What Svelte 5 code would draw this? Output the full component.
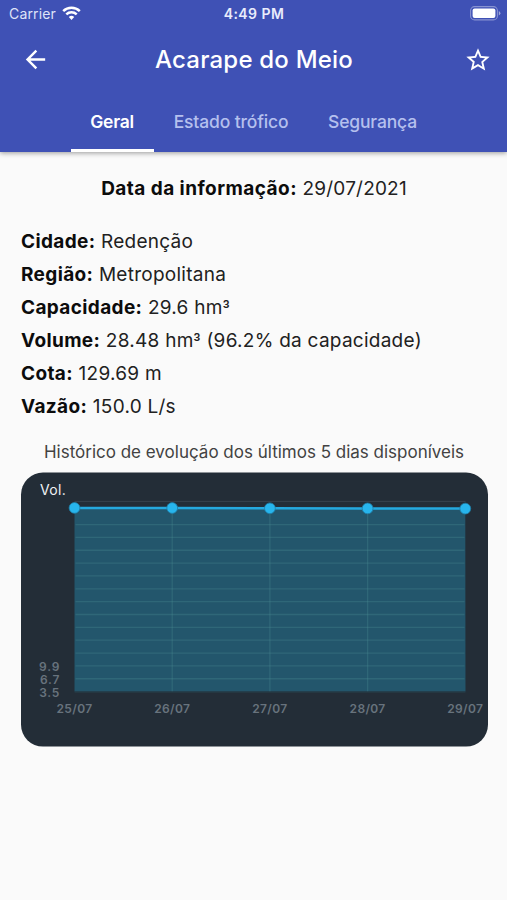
<script>
  const tabs = [
    { label: 'Geral', width: 83 },
    { label: 'Estado trófico', width: 155 },
    { label: 'Segurança', width: 128 },
  ];
  const info = [
    ['Cidade:', 'Redenção'],
    ['Região:', 'Metropolitana'],
    ['Capacidade:', '29.6 hm', '³'],
    ['Volume:', '28.48 hm', '³', ' (96.2% da capacidade)'],
    ['Cota:', '129.69 m'],
    ['Vazão:', '150.0 L/s'],
  ];
  const points = [
    { x: 53.5, y: 35.3, day: '25/07' },
    { x: 151.2, y: 35.4, day: '26/07' },
    { x: 248.9, y: 35.7, day: '27/07' },
    { x: 346.6, y: 35.8, day: '28/07' },
    { x: 444.3, y: 36, day: '29/07' },
  ];
  const bottom = 219;
  const step = 12.85;
  const rows = Array.from({ length: 13 }, (_, i) => bottom - (i + 1) * step);
  const line = points.map((p) => `${p.x},${p.y}`).join(' ');
  const ticks = [
    { y: 198.4, label: '9.9' },
    { y: 211.4, label: '6.7' },
    { y: 224.2, label: '3.5' },
  ];
</script>

<div class="screen">
  <header>
    <div class="status">
      <div class="carrier">
        <span>Carrier</span>
        <svg width="19" height="15" viewBox="0 0 19 15" fill="none" stroke="#fff" stroke-width="2.5">
          <path d="M1.2 5.1a12 12 0 0 1 16.6 0" />
          <path d="M4.3 8.3a7.5 7.5 0 0 1 10.4 0" />
          <path d="M9.5 14l-2.7-2.9a3.9 3.9 0 0 1 5.4 0z" fill="#fff" stroke="none" />
        </svg>
      </div>
      <span class="time">4:49 PM</span>
      <svg class="battery" width="31" height="15" viewBox="0 0 31 15">
        <rect x="0.6" y="0.6" width="26.8" height="13.3" rx="4" fill="none" stroke="#fff" stroke-opacity=".38" stroke-width="1.1" />
        <rect x="2.6" y="2.6" width="22.8" height="9.4" rx="2" fill="#fff" />
        <path d="M28.8 5v4.5q1.6-.7 1.6-2.25T28.8 5z" fill="#fff" fill-opacity=".5" />
      </svg>
    </div>
    <div class="bar">
      <svg width="29" height="29" viewBox="0 0 24 24" fill="#fff">
        <path d="M20 11H7.83l5.59-5.59L12 4l-8 8 8 8 1.41-1.41L7.83 13H20v-2z" />
      </svg>
      <h1>Acarape do Meio</h1>
      <svg width="28" height="28" viewBox="0 0 24 24" fill="#fff">
        <path d="M22 9.24l-7.19-.62L12 2 9.19 8.63 2 9.24l5.46 4.73L5.82 21 12 17.27 18.18 21l-1.63-7.03L22 9.24zM12 15.4l-3.76 2.27 1-4.28-3.32-2.88 4.38-.38L12 6.1l1.71 4.04 4.38.38-3.32 2.88 1 4.28L12 15.4z" />
      </svg>
    </div>
    <nav>
      {#each tabs as tab, i}
        <div class="tab" class:active={i === 0} style:width="{tab.width}px">{tab.label}</div>
      {/each}
    </nav>
  </header>

  <main>
    <p class="date"><b>Data da informação:</b> 29/07/2021</p>
    <div class="info">
      {#each info as [name, value, unit, rest]}
        <p><b>{name}</b> {value}{#if unit}<span class="cube">{unit}</span>{/if}{rest ?? ''}</p>
      {/each}
    </div>
    <p class="caption">Histórico de evolução dos últimos 5 dias disponíveis</p>
    <div class="chart">
      <svg width="467" height="274" viewBox="0 0 467 274">
        <text x="19" y="22.8" class="title">Vol.</text>
        <line x1="53.5" x2="444.5" y1="28.8" y2="28.8" stroke="#37434d" />
        <polygon points="53.5,{bottom} {line} 444.5,{bottom}" fill="#23566c" />
        {#each rows as y}
          <line x1="54.5" x2="443.5" y1={y} y2={y} class="grid" />
        {/each}
        {#each points.slice(1, 4) as p}
          <line x1={p.x} x2={p.x} y1="36" y2={bottom} class="grid" />
        {/each}
        <line x1="53.5" x2="444.5" y1="219.5" y2="219.5" stroke="#273f48" />
        <polyline points={line} fill="none" stroke="#25a9df" stroke-width="2.5" />
        {#each points as p}
          <circle cx={p.x} cy={p.y} r="5.4" fill="#27b5ed" stroke="#217da6" stroke-width=".8" />
          <text x={p.x} y="240.8" text-anchor="middle" class="day">{p.day}</text>
        {/each}
        {#each ticks as t}
          <text x="39.2" y={t.y} text-anchor="end" class="tick">{t.label}</text>
        {/each}
      </svg>
    </div>
  </main>
</div>

<style>
  :global(body) { background: #fafafa; }
  .screen {
    width: 507px;
    height: 900px;
    overflow: hidden;
    background: #fafafa;
    color: #212121;
    font-family: Inter, "Liberation Sans", sans-serif;
  }
  p, h1 { margin: 0; white-space: nowrap; }
  svg { display: block; }
  header {
    height: 152px;
    background: #3f51b5;
    color: #fff;
    box-shadow: 0 1px 5px rgba(0, 0, 0, .4);
  }
  .status {
    display: grid;
    grid-template-columns: 1fr auto 1fr;
    align-items: center;
    height: 27px;
    padding: 0 6px 0 7px;
    font-size: 14px;
  }
  .carrier { display: flex; align-items: center; gap: 6px; padding-left: 2px; color: #dfe3f8; letter-spacing: .15px; }
  .time { font-weight: 600; font-size: 14px; letter-spacing: .45px; color: #e9ecfc; }
  .battery { justify-self: end; }
  .bar {
    display: grid;
    grid-template-columns: 29px 1fr 28px;
    align-items: center;
    height: 65px;
    padding: 0 15px 0 21px;
  }
  h1 { padding-right: 6px; text-align: center; font-size: 24px; font-weight: 500; letter-spacing: .2px; }
  nav { display: flex; height: 60px; padding-left: 70.5px; }
  .tab {
    box-sizing: border-box;
    height: 60px;
    text-align: center;
    white-space: nowrap;
    line-height: 60px;
    font-size: 17.5px;
    font-weight: 500;
    letter-spacing: -.15px;
    color: #b5c0ee;
  }
  .active { color: #fff; font-weight: 600; letter-spacing: -.3px; border-bottom: 3px solid #fff; }
  main { padding: 20px 20px 0 21px; font-size: 19px; }
  b { font-weight: 700; letter-spacing: .37px; color: #0c0c0c; }
  .date { text-align: center; line-height: 33px; letter-spacing: .2px; }
  .date b { letter-spacing: .45px; }
  .info { padding-top: 20px; line-height: 33px; letter-spacing: .26px; }
  .cube { font-family: Roboto, Inter, sans-serif; line-height: 1; }
  .caption { padding-top: 16px; line-height: 26px; text-align: center; font-size: 17px; color: #424242; }
  .chart { margin: 7px 0 0 -.5px; width: 467px; height: 274px; border-radius: 22px; background: #232d37; overflow: hidden; transform: translateY(.6px); }
  .grid { stroke: #4a8b91; stroke-opacity: .32; stroke-width: 1.3; }
  .title { font-size: 14px; letter-spacing: .3px; fill: #eef2f5; }
  .day, .tick { font-size: 12px; font-weight: 600; fill: #68737d; letter-spacing: .35px; }
  .tick { letter-spacing: .8px; }
</style>
